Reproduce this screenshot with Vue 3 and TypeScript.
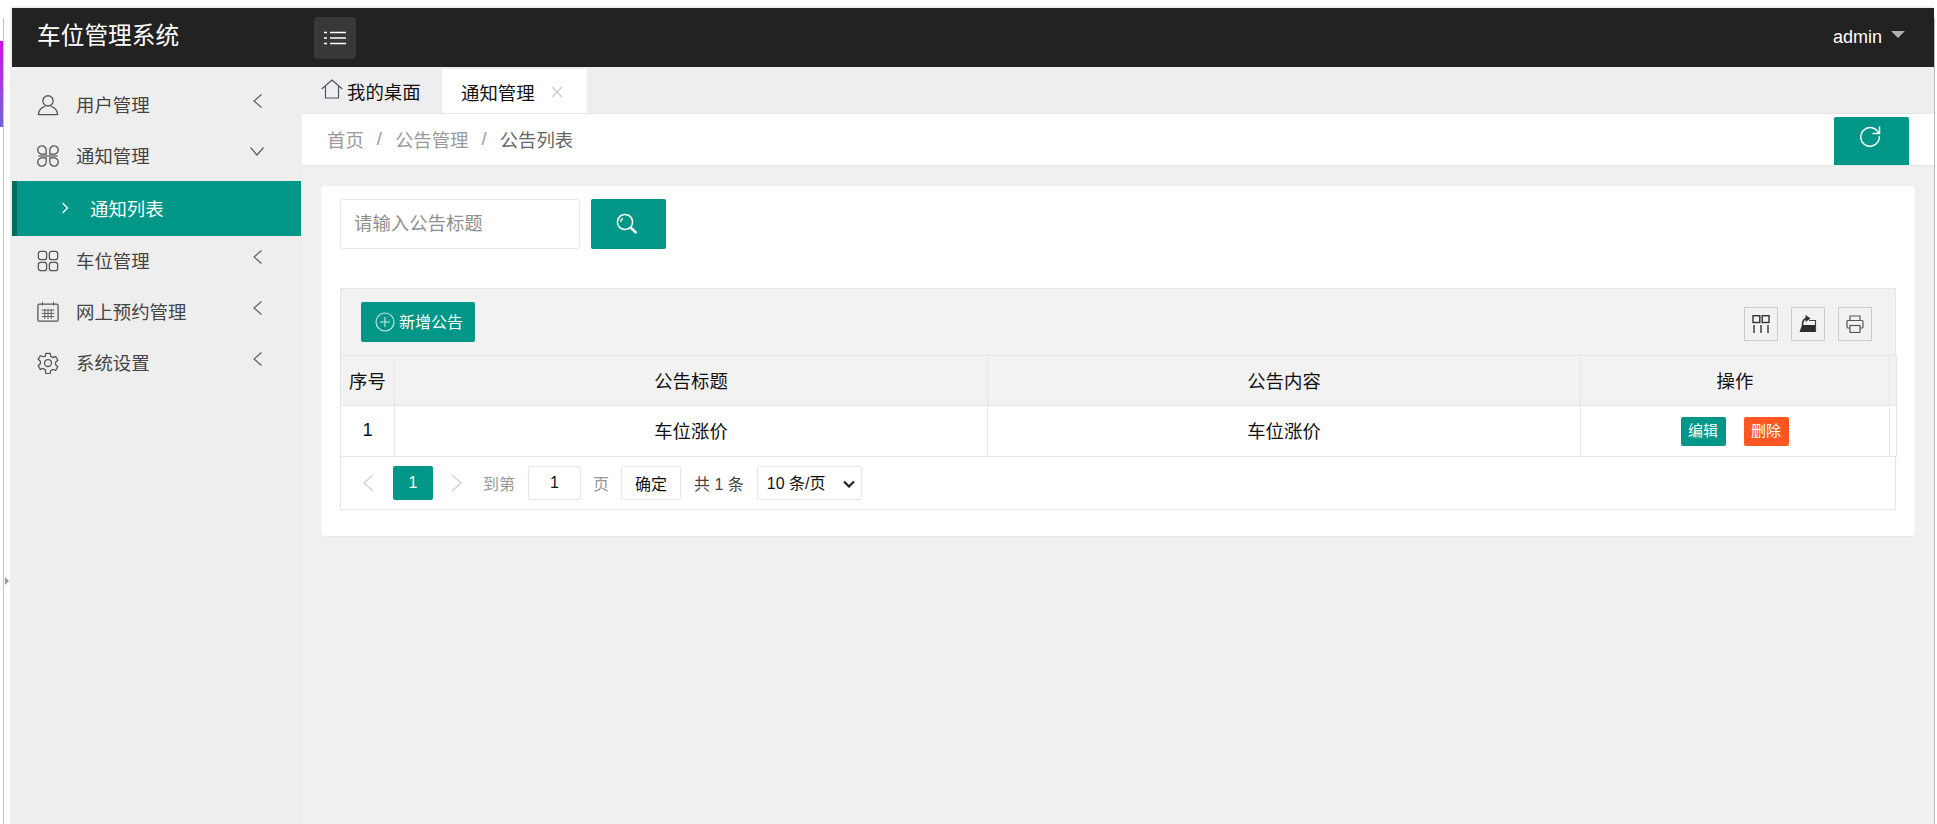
<script setup lang="ts">
interface MenuItem { label: string; icon: string; open?: boolean; children?: string[] }
const menu: MenuItem[] = [
  { label: '用户管理', icon: 'user' },
  { label: '通知管理', icon: 'cmd', open: true, children: ['通知列表'] },
  { label: '车位管理', icon: 'grid' },
  { label: '网上预约管理', icon: 'cal' },
  { label: '系统设置', icon: 'gear' },
]
</script>

<template>
  <div class="page">
    <div class="gutter">
      <div class="gutter-strip"></div>
      <div class="gutter-handle"></div>
    </div>
    <div class="frame">
      <div class="topstrip"></div>
      <header class="header">
        <div class="logo">车位管理系统</div>
        <button class="menu-btn" aria-label="menu">
          <svg width="22" height="14" viewBox="0 0 22 14" fill="none" stroke="#fff" stroke-width="1.6">
            <path d="M0 1.500h3M6 1.500h16M0 7h3M6 7h16M0 12.500h3M6 12.500h16" />
          </svg>
        </button>
        <div class="user">admin<span class="caret"></span></div>
      </header>
      <div class="body">
        <aside class="sidebar">
          <template v-for="m in menu" :key="m.label">
            <div class="mitem">
              <svg class="micon" viewBox="0 0 24 24" fill="none" stroke="#555" stroke-width="1.400">
                <template v-if="m.icon === 'user'">
                  <circle cx="12" cy="7.500" r="5.600" />
                  <path d="M1.500 23c0-5.500 4-8.600 7-9.600M22.500 23c0-5.500-4-8.600-7-9.600M1.500 22.600h21" />
                </template>
                <template v-else-if="m.icon === 'cmd'">
                  <path d="M10 10H6a4.600 4.600 0 1 1 4-4.600V10zM14 10h4a4.600 4.600 0 1 0-4-4.600V10zM10 14H6a4.600 4.600 0 1 0 4 4.600V14zM14 14h4a4.600 4.600 0 1 1-4 4.600V14z" />
                  <path d="M1.500 12h21" stroke-width="2" stroke="#8a8a8a" />
                </template>
                <template v-else-if="m.icon === 'grid'">
                  <rect x="1.500" y="1.500" width="9" height="9" rx="2.400" />
                  <rect x="13.500" y="1.500" width="9" height="9" rx="2.400" />
                  <rect x="1.500" y="13.500" width="9" height="9" rx="2.400" />
                  <rect x="13.500" y="13.500" width="9" height="9" rx="2.400" />
                </template>
                <template v-else-if="m.icon === 'cal'">
                  <rect x="1" y="3.500" width="22" height="18.500" rx="1.400" />
                  <path d="M6 1v4M18 1v4M5 10h14M5 13.500h14M5 17h14M8.500 8.500v11M12 8.500v11M15.500 8.500v11" stroke-width="1" />
                </template>
                <template v-else>
                  <path d="M9.700 1.500h4.600l.7 3.200 2.300 1.300 3.100-1 2.300 4-2.400 2.200v2.600l2.400 2.200-2.300 4-3.100-1-2.300 1.300-.7 3.200H9.700L9 19.300 6.700 18l-3.100 1-2.300-4 2.400-2.200v-2.600L1.300 8l2.300-4 3.100 1L9 4.700z" />
                  <circle cx="12" cy="12" r="3.800" />
                </template>
              </svg>
              <span class="mlabel">{{ m.label }}</span>
              <svg v-if="m.open" class="mchev-down" width="14" height="9" viewBox="0 0 14 9" fill="none" stroke="#5f5f5f" stroke-width="1.200">
                <path d="M.5 .5L7 8l6.500-7.500" />
              </svg>
              <svg v-else class="mchev" width="9" height="14" viewBox="0 0 9 14" fill="none" stroke="#5f5f5f" stroke-width="1.200">
                <path d="M8.500 .5L1 7l7.500 6.500" />
              </svg>
            </div>
            <div v-for="c in m.children" :key="c" class="msub">
              <svg width="8" height="12" viewBox="0 0 8 12" fill="none" stroke="#fff" stroke-width="1.400">
                <path d="M1.500 1l5 5-5 5" />
              </svg>
              <span>{{ c }}</span>
            </div>
          </template>
        </aside>
        <main class="content">
          <nav class="tabs">
            <div class="tab-home">
              <svg width="22" height="20" viewBox="0 0 22 20" fill="none" stroke="#4a5560" stroke-width="1.200">
                <path d="M.7 10L11 1l10.300 9M4.500 7.500V19h13V7.500" />
              </svg>
              <span>我的桌面</span>
            </div>
            <div class="tab-active">
              <span>通知管理</span>
              <svg width="12" height="12" viewBox="0 0 12 12" fill="none" stroke="#c8c8c8" stroke-width="1.200">
                <path d="M1 1l10 10M11 1L1 11" />
              </svg>
            </div>
          </nav>
          <div class="crumbs">
            <span class="c-item">首页</span><span class="c-sep">/</span>
            <span class="c-item">公告管理</span><span class="c-sep">/</span>
            <span class="c-last">公告列表</span>
            <button class="refresh" aria-label="refresh">
              <svg width="22" height="22" viewBox="0 0 22 22" fill="none" stroke="#fff" stroke-width="1.500">
                <path d="M19.700 8.500A9.300 9.300 0 1 0 20.300 11M20.500 1.500v7h-7" />
              </svg>
            </button>
          </div>
          <section class="card">
            <div class="search">
              <input class="search-input" placeholder="请输入公告标题" />
              <button class="search-btn" aria-label="search">
                <svg width="22" height="22" viewBox="0 0 22 22" fill="none" stroke="#fff" stroke-width="1.500">
                  <circle cx="9" cy="9" r="7.600" />
                  <path d="M4.700 9a4.300 4.300 0 0 1 2-3.600" />
                  <path d="M14.500 14.500l6 5.500" stroke-width="2.400" />
                </svg>
              </button>
            </div>
            <div class="toolbar">
              <button class="add-btn">
                <svg width="20" height="20" viewBox="0 0 20 20" fill="none" stroke="#cfeae6" stroke-width="1.100">
                  <circle cx="10" cy="10" r="9" />
                  <path d="M10 5v10M5 10h10" />
                </svg>
                <span class="add-label">新增公告</span>
              </button>
              <div class="tools">
                <div class="tool">
                  <svg width="18" height="18" viewBox="0 0 18 18" fill="none" stroke="#333" stroke-width="1.400">
                    <rect x="1" y=".7" width="6.800" height="6.800" />
                    <rect x="10.200" y=".7" width="6.800" height="6.800" />
                    <path d="M2 10v8M9 10v8M16 10v8" />
                  </svg>
                </div>
                <div class="tool">
                  <svg width="18" height="18" viewBox="0 0 18 18">
                    <path d="M.5 17L3 10h14v7z" fill="#2d2d2d" />
                    <path d="M10 5.500h6.500V17" fill="none" stroke="#3a4650" stroke-width="1.200" />
                    <path d="M3.500 10c0-4 1.500-6.500 4.500-6.500" fill="none" stroke="#2d2d2d" stroke-width="1.500" />
                    <path d="M6.500 0l5 3.500-5 3.500z" fill="#2d2d2d" />
                  </svg>
                </div>
                <div class="tool">
                  <svg width="18" height="18" viewBox="0 0 18 18" fill="none" stroke="#555" stroke-width="1.200">
                    <path d="M4 5V1h10v4" />
                    <path d="M4 13H2a1 1 0 0 1-1-1V6.500a1 1 0 0 1 1-1h14a1 1 0 0 1 1 1V12a1 1 0 0 1-1 1h-2" />
                    <rect x="4" y="10.500" width="10" height="7" />
                  </svg>
                </div>
              </div>
            </div>
            <table class="grid">
              <colgroup>
                <col class="c1" /><col class="c2" /><col class="c3" /><col class="c4" /><col class="c5" />
              </colgroup>
              <thead>
                <tr><th>序号</th><th>公告标题</th><th>公告内容</th><th>操作</th><th class="filler"></th></tr>
              </thead>
              <tbody>
                <tr>
                  <td>1</td><td>车位涨价</td><td>车位涨价</td>
                  <td class="ops-cell">
                    <div class="ops">
                      <span class="op op-edit">编辑</span>
                      <span class="op op-del">删除</span>
                    </div>
                  </td>
                  <td class="filler"></td>
                </tr>
              </tbody>
            </table>
            <div class="pager">
              <svg class="pg-arrow" width="12" height="18" viewBox="0 0 12 18" fill="none" stroke="#d2d2d2" stroke-width="1.400"><path d="M11 1L2 9l9 8" /></svg>
              <span class="pg-cur">1</span>
              <svg class="pg-arrow next" width="12" height="18" viewBox="0 0 12 18" fill="none" stroke="#d2d2d2" stroke-width="1.400"><path d="M1 1l9 8-9 8" /></svg>
              <span class="pg-mute goto">到第</span>
              <input class="pg-input" value="1" />
              <span class="pg-mute page-word">页</span>
              <button class="pg-ok">确定</button>
              <span class="pg-total">共 1 条</span>
              <div class="select-wrap">
                <select class="pg-select">
                  <option>10 条/页</option>
                  <option>20 条/页</option>
                </select>
                <svg class="select-chev" width="12" height="8" viewBox="0 0 12 8" fill="none" stroke="#222" stroke-width="2.200">
                  <path d="M1 1.500l5 5 5-5" />
                </svg>
              </div>
            </div>
          </section>
        </main>
      </div>
    </div>
    <div class="edge"></div>
  </div>
</template>

<style>
html, body { margin: 0; padding: 0; overflow: hidden; }
</style>

<style scoped>
.page {
  display: flex;
  width: 1937px;
  height: 824px;
  overflow: hidden;
  background: #fff;
  font-family: "Liberation Sans", "Noto Sans CJK SC", sans-serif;
  color: #333;
}
.gutter {
  width: 10px;
  flex: none;
  box-sizing: border-box;
  border-left: 3px solid transparent;
  position: relative;
}
.gutter::before {
  content: "";
  position: absolute;
  left: 0;
  top: 18px;
  bottom: 0;
  width: 1px;
  background: #c4c4c4;
}
.gutter-strip {
  position: absolute;
  left: -3px;
  top: 41px;
  width: 3px;
  height: 86px;
  background: linear-gradient(180deg, #d60ee8, #6f68d8);
}
.gutter-handle {
  position: absolute;
  left: 2px;
  top: 577px;
  width: 0;
  height: 0;
  border-top: 4px solid transparent;
  border-bottom: 4px solid transparent;
  border-left: 4px solid #999;
}
.frame {
  flex: 1;
  min-width: 0;
  display: flex;
  flex-direction: column;
  background: #eee;
  padding-left: 2px;
}
.topstrip {
  height: 6px;
  margin-left: -2px;
  background: #fff;
  border-bottom: 2px solid #eee;
  flex: none;
}
.edge {
  width: 3px;
  flex: none;
  box-sizing: border-box;
  border-left: 1px solid #bdbdbd;
  margin-top: 18px;
}
.header {
  height: 59px;
  flex: none;
  background: #222;
  display: flex;
  align-items: center;
  color: #fff;
}
.logo {
  width: 302px;
  box-sizing: border-box;
  padding-left: 25px;
  font-size: 23.700px;
  line-height: 59px;
  margin-top: -2px;
  white-space: nowrap;
}
.menu-btn {
  width: 42px;
  height: 42px;
  background: #383838;
  border: 0;
  border-radius: 4px;
  padding: 0;
  display: flex;
  align-items: center;
  justify-content: center;
}
.user {
  margin-left: auto;
  margin-right: 29px;
  font-size: 18px;
  display: flex;
  align-items: center;
}
.caret {
  margin-left: 9px;
  margin-top: -6px;
  width: 0;
  height: 0;
  border-left: 7px solid transparent;
  border-right: 7px solid transparent;
  border-top: 7px solid #b0b0b0;
}
.body {
  flex: 1;
  display: flex;
  min-height: 0;
}
.sidebar {
  width: 289px;
  flex: none;
  background: #eee;
  padding-top: 13px;
}
.mitem {
  height: 51px;
  display: flex;
  align-items: center;
  padding-left: 25px;
  position: relative;
  color: #444;
  font-size: 18.400px;
}
.micon {
  width: 22px;
  height: 22px;
  flex: none;
  margin-top: -1px;
}
.mlabel {
  margin-left: 17px;
  line-height: 1;
  margin-top: 2px;
}
.mchev {
  position: absolute;
  left: 241px;
  top: 14px;
}
.mchev-down {
  position: absolute;
  left: 238px;
  top: 16px;
}
.msub {
  height: 55px;
  margin-top: -1px;
  box-sizing: border-box;
  border-left: 5px solid #006d60;
  background: #009688;
  color: #fff;
  display: flex;
  align-items: center;
  padding: 0 0 2px 44px;
  font-size: 18.400px;
  gap: 21px;
}
.content {
  flex: 1;
  min-width: 0;
  background: #f0f0f0;
  margin-left: 1px;
}
.tabs {
  height: 46px;
  background: #eeeef0;
  display: flex;
  align-items: flex-end;
  box-sizing: border-box;
  padding-left: 19px;
  font-size: 18.400px;
  color: #111;
}
.tab-home {
  height: 45px;
  display: flex;
  align-items: center;
  gap: 4px;
  width: 121px;
}
.tab-home svg { margin-top: -4px; }
.tab-active {
  width: 145px;
  height: 45px;
  margin-bottom: -1px;
  background: #fff;
  border-radius: 2px 2px 0 0;
  display: flex;
  align-items: center;
  box-sizing: border-box;
  padding-left: 19px;
  gap: 16px;
  position: relative;
}
.crumbs {
  height: 53px;
  box-sizing: border-box;
  background: #fff;
  border-top: 1px solid #e6e6e6;
  border-bottom: 1px solid #e6e6e6;
  display: flex;
  align-items: center;
  padding: 0 0 2px 25px;
  font-size: 18.400px;
  color: #999;
  position: relative;
}
.c-sep { margin: 0 13px; color: #999; }
.c-last { color: #666; }
.refresh {
  margin-left: auto;
  margin-right: 25px;
  align-self: flex-end;
  width: 75px;
  height: 48px;
  margin-bottom: -2px;
  background: #009688;
  border: 0;
  border-radius: 2px 2px 0 0;
  padding: 0 3px 11px 0;
  display: flex;
  align-items: center;
  justify-content: center;
}
.card {
  margin: 20px 19px 0 19px;
  height: 350px;
  background: #fff;
  border-radius: 4px;
  box-sizing: border-box;
  padding: 13px 19px 0;
  box-shadow: 0 1px 2px rgba(0, 0, 0, 0.04);
}
.search {
  display: flex;
  gap: 11px;
  height: 50px;
}
.search-input {
  width: 240px;
  height: 50px;
  box-sizing: border-box;
  border: 1px solid #e6e6e6;
  border-radius: 3px;
  padding: 0 13px;
  font: inherit;
  font-size: 18.400px;
  color: #333;
  outline: none;
}
.search-input::placeholder { color: #8f8f8f; }
.search-btn {
  width: 75px;
  height: 50px;
  background: #009688;
  border: 0;
  border-radius: 2px;
  padding: 0 4px 0 0;
  display: flex;
  align-items: center;
  justify-content: center;
}
.toolbar {
  margin-top: 39px;
  height: 67px;
  box-sizing: border-box;
  background: #f2f2f2;
  border: 1px solid #e6e6e6;
  border-bottom: 0;
  display: flex;
  align-items: center;
  padding: 0 23px 0 20px;
}
.add-btn {
  width: 114px;
  height: 40px;
  background: #009688;
  border: 0;
  border-radius: 2px;
  color: #fff;
  font: inherit;
  font-size: 16px;
  display: flex;
  align-items: center;
  padding: 0 0 0 14px;
  gap: 4px;
}
.add-label { margin-top: -3px; }
.tools {
  margin-left: auto;
  margin-top: 4px;
  display: flex;
  gap: 13px;
}
.tool {
  width: 34px;
  height: 34px;
  box-sizing: border-box;
  border: 1px solid #ccc;
  display: flex;
  align-items: center;
  justify-content: center;
}
.grid {
  width: 1556px;
  table-layout: fixed;
  border-collapse: collapse;
  font-size: 18.400px;
  color: #111;
}
.c1 { width: 54px; }
.c2 { width: 593px; }
.c3 { width: 593px; }
.c4 { width: 309px; }
.c5 { width: 7px; }
.grid th {
  height: 50px;
  box-sizing: border-box;
  padding: 0 0 2px;
  font-weight: 400;
  background: #f2f2f2;
  border: 1px solid #e6e6e6;
}
.grid td {
  height: 51px;
  box-sizing: border-box;
  padding: 0 0 3px;
  text-align: center;
  border: 1px solid #e6e6e6;
}
.grid .filler { padding: 0; }
.grid .ops-cell { padding: 0; }
.ops {
  display: flex;
  justify-content: center;
  gap: 18px;
  margin-right: 1px;
}
.op {
  width: 45px;
  height: 29px;
  border-radius: 2px;
  color: #fff;
  font-size: 15px;
  line-height: 28px;
  text-align: center;
}
.op-edit { background: #009688; }
.op-del { background: #ff5722; }
.pager {
  height: 53px;
  box-sizing: border-box;
  background: #fff;
  border: 1px solid #e6e6e6;
  border-top: 0;
  display: flex;
  align-items: center;
  font-size: 16px;
  padding-left: 21px;
}
.pg-arrow { flex: none; }
.pg-cur {
  margin-left: 19px;
  width: 40px;
  height: 34px;
  background: #009688;
  border-radius: 2px;
  color: #fff;
  text-align: center;
  line-height: 34px;
}
.next { margin-left: 18px; }
.pg-mute { color: #999; }
.goto { margin-left: 20px; }
.pg-input {
  margin-left: 13px;
  width: 53px;
  height: 34px;
  box-sizing: border-box;
  border: 1px solid #e6e6e6;
  border-radius: 2px;
  text-align: center;
  font: inherit;
  color: #111;
  outline: none;
  padding: 0;
}
.page-word { margin-left: 12px; }
.pg-ok {
  margin-left: 12px;
  width: 60px;
  height: 34px;
  background: #fff;
  border: 1px solid #e6e6e6;
  border-radius: 2px;
  font: inherit;
  color: #111;
  padding: 0;
}
.pg-total { margin-left: 13px; color: #444; }
.select-wrap {
  margin-left: 13px;
  position: relative;
  width: 105px;
  height: 34px;
}
.pg-select {
  width: 105px;
  height: 34px;
  box-sizing: border-box;
  border: 1px solid #e6e6e6;
  border-radius: 2px;
  background: #fff;
  font: inherit;
  color: #111;
  padding: 0 9px;
  outline: none;
  appearance: none;
}
.select-chev {
  position: absolute;
  right: 7px;
  top: 14px;
  pointer-events: none;
}
</style>
